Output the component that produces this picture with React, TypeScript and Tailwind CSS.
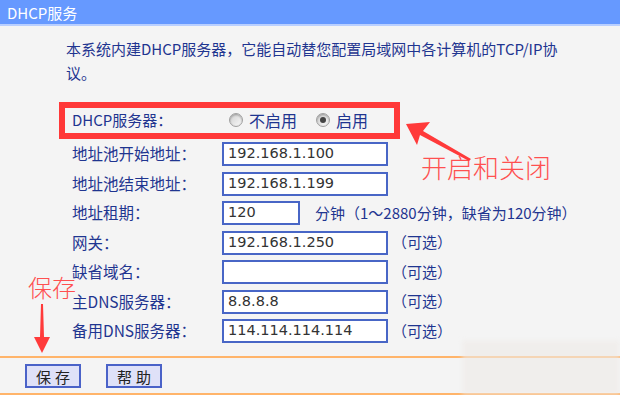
import React from 'react';

const cjk = { fontFamily: '"Noto Sans CJK SC", "DejaVu Sans", sans-serif' };
const num = { fontFamily: '"DejaVu Sans", "Liberation Sans", sans-serif' };

type Row = {
  label: string;
  value: string;
  wide?: boolean;
  note?: string;
};

const rows: Row[] = [
  { label: '地址池开始地址：', value: '192.168.1.100', wide: true },
  { label: '地址池结束地址：', value: '192.168.1.199', wide: true },
  { label: '地址租期：', value: '120', note: '分钟（1～2880分钟，缺省为120分钟）' },
  { label: '网关：', value: '192.168.1.250', wide: true, note: '（可选）' },
  { label: '缺省域名：', value: '', wide: true, note: '（可选）' },
  { label: '主DNS服务器：', value: '8.8.8.8', wide: true, note: '（可选）' },
  { label: '备用DNS服务器：', value: '114.114.114.114', wide: true, note: '（可选）' },
];

function Radio({ checked }: { checked?: boolean }) {
  return (
    <span className="w-[14px] h-[14px] rounded-full border border-[#a0a0a0] bg-gradient-to-br from-[#cfcfcf] to-[#fafafa] flex items-center justify-center shadow-[inset_0_1px_2px_rgba(0,0,0,0.3)]">
      {checked && <span className="w-[6px] h-[6px] rounded-full bg-[#444]" />}
    </span>
  );
}

export default function App() {
  return (
    <div className="relative w-[620px] h-[395px] overflow-hidden bg-[#f4f4f4] text-[#1f3590]" style={cjk}>
      {/* Header */}
      <div className="h-[26px] bg-[#6699ff] border-b-2 border-[#b9cfff] flex items-center pl-[7px]">
        <span className="text-white text-[15px] leading-none">DHCP服务</span>
      </div>

      {/* Intro */}
      <p className="mt-[11px] pl-[66px] text-[15px] leading-[24px]">
        本系统内建DHCP服务器，它能自动替您配置局域网中各计算机的TCP/IP协
        <br />
        议。
      </p>

      {/* DHCP on/off */}
      <div className="mt-[23px] h-[24px] flex items-center text-[15px]">
        <span className="pl-[72px] w-[229px]">DHCP服务器：</span>
        <Radio />
        <span className="ml-[6px] text-[16px]">不启用</span>
        <span className="ml-[19px]" />
        <Radio checked />
        <span className="ml-[6px] text-[16px]">启用</span>
      </div>

      {/* Fields */}
      <div className="mt-[10px] flex flex-col gap-[5.5px] text-[15.5px]">
        {rows.map((r) => (
          <div key={r.label} className="h-[24px] flex items-center">
            <span className="pl-[72px] w-[222px] shrink-0">{r.label}</span>
            <div
              className={`h-[24px] border-2 border-[#4866c6] bg-white flex items-center pl-[4px] text-[14.5px] text-[#333] ${r.wide ? 'w-[166px]' : 'w-[78px]'}`}
              style={num}
            >
              {r.value}
            </div>
            {r.note && (
              <span className={`${r.wide ? 'ml-[4px]' : 'ml-[15px]'} text-[15px]`}>{r.note}</span>
            )}
          </div>
        ))}
      </div>

      {/* Footer */}
      <div className="absolute left-0 right-0 top-[356px] border-t-2 border-b-2 border-[#ffb46a] h-[39px] flex items-center gap-[25px] pl-[25px]">
        <button className="w-[56px] h-[24px] bg-[#dfe1f8] border-2 border-[#4a62c8] text-[#222] text-[15px] tracking-[4px] pl-[4px]">
          保存
        </button>
        <button className="w-[56px] h-[24px] bg-[#dfe1f8] border-2 border-[#4a62c8] text-[#222] text-[15px] tracking-[4px] pl-[4px]">
          帮助
        </button>
      </div>

      {/* Annotations */}
      <div className="absolute left-[59px] top-[102px] w-[341px] h-[37px] border-[6px] border-[#ff3838]" />
      <span className="absolute left-[421px] top-[154px] text-[26px] leading-none font-light text-[#ff5050]">
        开启和关闭
      </span>
      <svg className="absolute left-0 top-0" width="620" height="395" viewBox="0 0 620 395">
        <polygon points="406,124 430,122 423,131 471,159 469,161 420,135 417,145" fill="#ff3a3a" />
        <polygon points="41,304 43,304 44,337 50,337 42,353 34,337 40,337" fill="#ff3a3a" />
      </svg>
      <span className="absolute left-[28px] top-[275px] text-[24px] leading-none font-light text-[#ff5050]">
        保存
      </span>

      {/* faint watermark */}
      <div className="absolute left-[462px] top-[340px] w-[158px] h-[55px] bg-[#efebe8] opacity-60 blur-[2px]" />
    </div>
  );
}
